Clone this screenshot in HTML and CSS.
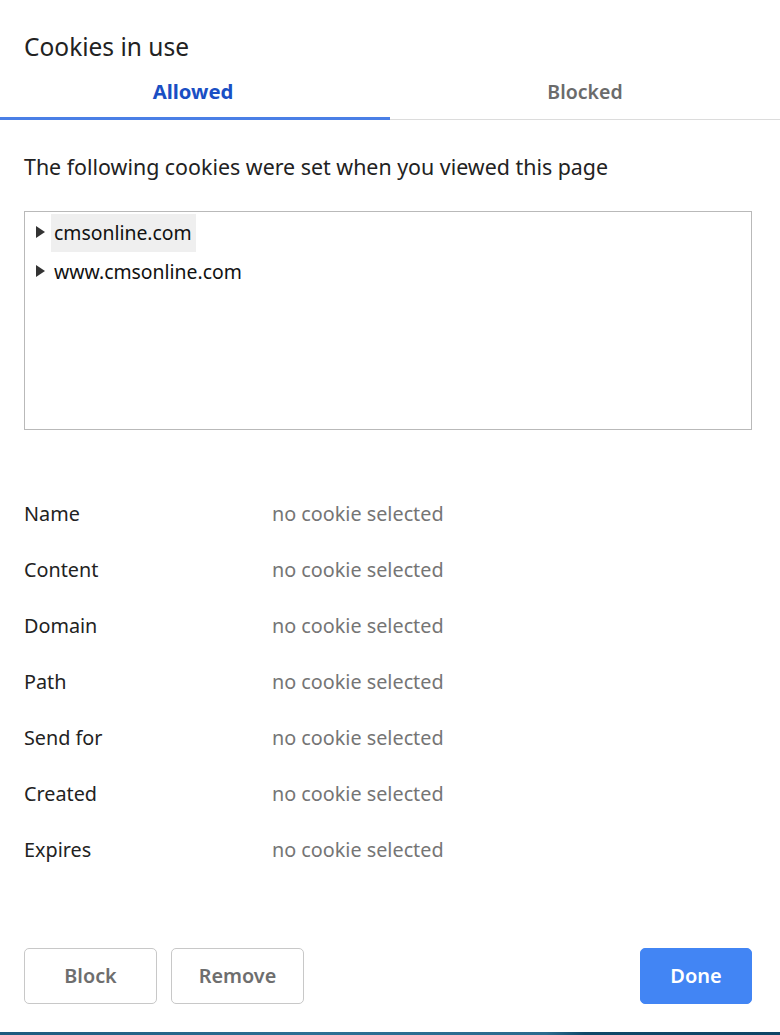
FILE: index.html
```html
<!DOCTYPE html>
<html>
<head>
<meta charset="utf-8">
<link rel="stylesheet" href="styles.css">
</head>
<body>
<div class="dialog">
  <h1 class="title">Cookies in use</h1>
  <div class="tabs">
    <div class="tab active">Allowed</div>
    <div class="tab">Blocked</div>
  </div>
  <div class="panel">
    <p class="intro">The following cookies were set when you viewed this page</p>
    <div class="tree">
      <div class="node"><span class="tri"></span><span class="label selected">cmsonline.com</span></div>
      <div class="node"><span class="tri"></span><span class="label">www.cmsonline.com</span></div>
    </div>
    <div class="details">
      <div class="row"><span class="key">Name</span><span class="val">no cookie selected</span></div>
      <div class="row"><span class="key">Content</span><span class="val">no cookie selected</span></div>
      <div class="row"><span class="key">Domain</span><span class="val">no cookie selected</span></div>
      <div class="row"><span class="key">Path</span><span class="val">no cookie selected</span></div>
      <div class="row"><span class="key">Send for</span><span class="val">no cookie selected</span></div>
      <div class="row"><span class="key">Created</span><span class="val">no cookie selected</span></div>
      <div class="row"><span class="key">Expires</span><span class="val">no cookie selected</span></div>
    </div>
  </div>
  <div class="buttons">
    <button class="btn">Block</button>
    <button class="btn">Remove</button>
    <span class="spacer"></span>
    <button class="btn primary">Done</button>
  </div>
</div>
<div class="taskbar"></div>
</body>
</html>
```

FILE: styles.css
```css
* { box-sizing: border-box; }
html, body { margin: 0; padding: 0; background: #fff; }
body {
  width: 780px;
  height: 1035px;
  overflow: hidden;
  font-family: "Noto Sans", "Open Sans", sans-serif;
  color: #202124;
  position: relative;
}
.dialog { height: 1032px; display: flex; flex-direction: column; }
.title {
  margin: 0;
  padding: 31px 0 0 24px;
  height: 70px;
  font-size: 24.5px;
  font-weight: 400;
  line-height: 32px;
  color: #222;
}
.tabs { display: flex; height: 50px; }
.tab {
  flex: none;
  width: 50%;
  text-align: center;
  font-size: 19.5px;
  font-weight: 600;
  color: #6b6b6b;
  line-height: 43px;
  border-bottom: 1px solid #dcdcdc;
}
.tab.active {
  color: #1a4fc4;
  font-size: 20.3px;
  font-weight: 700;
  border-bottom: 3px solid #4a7fe6;
  padding-right: 4px;
}
.panel { padding: 0 28px 0 24px; }
.intro {
  margin: 0;
  padding: 33px 0 0 0;
  height: 91px;
  font-size: 21.4px;
  line-height: 28px;
  color: #222;
}
.tree {
  height: 219px;
  border: 1px solid #b9b9b9;
  padding: 1px 0 0 10px;
}
.node { display: flex; align-items: center; height: 39px; }
.tri {
  width: 0; height: 0;
  border-left: 9px solid #333;
  border-top: 6px solid transparent;
  border-bottom: 6px solid transparent;
  margin: -2px 6px 0 1px;
}
.label {
  font-size: 19.4px;
  line-height: 38px;
  padding: 0 4px 0 3px;
  color: #111;
}
.label.selected { background: #efefef; }
.details { padding-top: 55px; }
.row {
  display: flex;
  height: 56px;
  align-items: center;
  font-size: 19.8px;
}
.key { width: 248px; color: #222; }
.val { color: #757575; }
.buttons {
  margin-top: auto;
  display: flex;
  gap: 14px;
  padding: 0 28px 28px 24px;
}
.spacer { flex: 1; }
.btn {
  height: 56px;
  width: 133px;
  border: 1px solid #c8c8c8;
  border-radius: 5px;
  background: #fff;
  font-family: inherit;
  font-size: 19.8px;
  font-weight: 600;
  color: #6e6e6e;
  padding-bottom: 2px;
}
.btn.primary {
  width: 112px;
  background: #4285f4;
  border-color: #4285f4;
  color: #fff;
  font-size: 20px;
}
.taskbar {
  height: 3px;
  background: linear-gradient(90deg, #1d5a7e 0%, #2d6f94 40%, #2a6a8e 70%, #0f4768 75%, #0d4466 100%);
}
```
